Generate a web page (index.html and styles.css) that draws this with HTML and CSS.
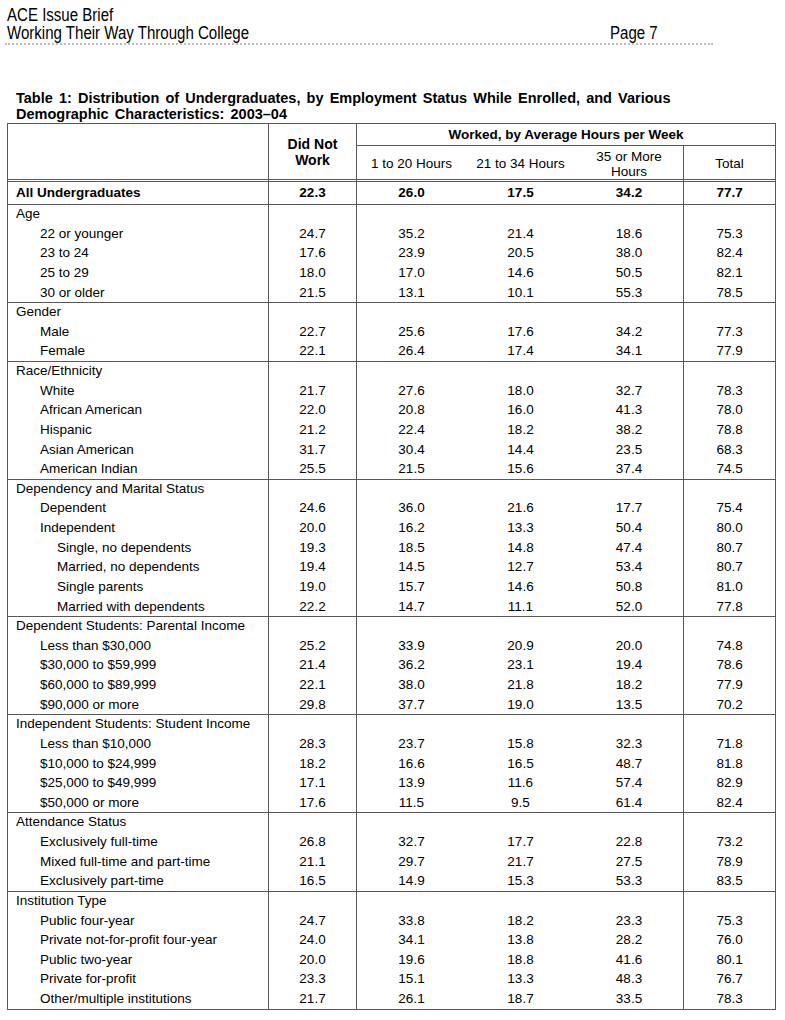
FILE: index.html
```html
<!DOCTYPE html>
<html lang="en">
<head>
<meta charset="utf-8">
<title>ACE Issue Brief – Table 1</title>
<link rel="stylesheet" href="styles.css">
</head>
<body>
<div class="page">
  <header class="runhead">
    <div class="rh-line"><span class="narrow">ACE Issue Brief</span></div>
    <div class="rh-line rh-row"><span class="rh-title"><span class="narrow">Working Their Way Through College</span></span><span class="rh-page"><span class="narrow">Page 7</span></span></div>
  </header>

  <h1 class="caption">Table 1: Distribution of Undergraduates, by Employment Status While Enrolled, and Various<br>Demographic Characteristics: 2003–04</h1>

  <table class="dist">
    <colgroup>
      <col class="w-label"><col class="w-dnw"><col class="w-hr"><col class="w-hr"><col class="w-hr"><col class="w-tot">
    </colgroup>
    <thead>
      <tr>
        <th class="h-blank" rowspan="2"></th>
        <th class="h-dnw" rowspan="2">Did Not<br>Work</th>
        <th class="h-worked" colspan="4">Worked, by Average Hours per Week</th>
      </tr>
      <tr class="h-sub">
        <th>1 to 20 Hours</th>
        <th>21 to 34 Hours</th>
        <th class="h-two">35 or More<br>Hours</th>
        <th class="h-total">Total</th>
      </tr>
    </thead>
    <tbody class="all">
      <tr><td>All Undergraduates</td><td>22.3</td><td>26.0</td><td>17.5</td><td>34.2</td><td>77.7</td></tr>
    </tbody>
    <tbody class="grp">
      <tr class="gh"><td>Age</td><td></td><td></td><td></td><td></td><td></td></tr>
      <tr class="l1"><td>22 or younger</td><td>24.7</td><td>35.2</td><td>21.4</td><td>18.6</td><td>75.3</td></tr>
      <tr class="l1"><td>23 to 24</td><td>17.6</td><td>23.9</td><td>20.5</td><td>38.0</td><td>82.4</td></tr>
      <tr class="l1"><td>25 to 29</td><td>18.0</td><td>17.0</td><td>14.6</td><td>50.5</td><td>82.1</td></tr>
      <tr class="l1"><td>30 or older</td><td>21.5</td><td>13.1</td><td>10.1</td><td>55.3</td><td>78.5</td></tr>
    </tbody>
    <tbody class="grp">
      <tr class="gh"><td>Gender</td><td></td><td></td><td></td><td></td><td></td></tr>
      <tr class="l1"><td>Male</td><td>22.7</td><td>25.6</td><td>17.6</td><td>34.2</td><td>77.3</td></tr>
      <tr class="l1"><td>Female</td><td>22.1</td><td>26.4</td><td>17.4</td><td>34.1</td><td>77.9</td></tr>
    </tbody>
    <tbody class="grp">
      <tr class="gh"><td>Race/Ethnicity</td><td></td><td></td><td></td><td></td><td></td></tr>
      <tr class="l1"><td>White</td><td>21.7</td><td>27.6</td><td>18.0</td><td>32.7</td><td>78.3</td></tr>
      <tr class="l1"><td>African American</td><td>22.0</td><td>20.8</td><td>16.0</td><td>41.3</td><td>78.0</td></tr>
      <tr class="l1"><td>Hispanic</td><td>21.2</td><td>22.4</td><td>18.2</td><td>38.2</td><td>78.8</td></tr>
      <tr class="l1"><td>Asian American</td><td>31.7</td><td>30.4</td><td>14.4</td><td>23.5</td><td>68.3</td></tr>
      <tr class="l1"><td>American Indian</td><td>25.5</td><td>21.5</td><td>15.6</td><td>37.4</td><td>74.5</td></tr>
    </tbody>
    <tbody class="grp">
      <tr class="gh"><td>Dependency and Marital Status</td><td></td><td></td><td></td><td></td><td></td></tr>
      <tr class="l1"><td>Dependent</td><td>24.6</td><td>36.0</td><td>21.6</td><td>17.7</td><td>75.4</td></tr>
      <tr class="l1"><td>Independent</td><td>20.0</td><td>16.2</td><td>13.3</td><td>50.4</td><td>80.0</td></tr>
      <tr class="l2"><td>Single, no dependents</td><td>19.3</td><td>18.5</td><td>14.8</td><td>47.4</td><td>80.7</td></tr>
      <tr class="l2"><td>Married, no dependents</td><td>19.4</td><td>14.5</td><td>12.7</td><td>53.4</td><td>80.7</td></tr>
      <tr class="l2"><td>Single parents</td><td>19.0</td><td>15.7</td><td>14.6</td><td>50.8</td><td>81.0</td></tr>
      <tr class="l2"><td>Married with dependents</td><td>22.2</td><td>14.7</td><td>11.1</td><td>52.0</td><td>77.8</td></tr>
    </tbody>
    <tbody class="grp">
      <tr class="gh"><td>Dependent Students: Parental Income</td><td></td><td></td><td></td><td></td><td></td></tr>
      <tr class="l1"><td>Less than $30,000</td><td>25.2</td><td>33.9</td><td>20.9</td><td>20.0</td><td>74.8</td></tr>
      <tr class="l1"><td>$30,000 to $59,999</td><td>21.4</td><td>36.2</td><td>23.1</td><td>19.4</td><td>78.6</td></tr>
      <tr class="l1"><td>$60,000 to $89,999</td><td>22.1</td><td>38.0</td><td>21.8</td><td>18.2</td><td>77.9</td></tr>
      <tr class="l1"><td>$90,000 or more</td><td>29.8</td><td>37.7</td><td>19.0</td><td>13.5</td><td>70.2</td></tr>
    </tbody>
    <tbody class="grp">
      <tr class="gh"><td>Independent Students: Student Income</td><td></td><td></td><td></td><td></td><td></td></tr>
      <tr class="l1"><td>Less than $10,000</td><td>28.3</td><td>23.7</td><td>15.8</td><td>32.3</td><td>71.8</td></tr>
      <tr class="l1"><td>$10,000 to $24,999</td><td>18.2</td><td>16.6</td><td>16.5</td><td>48.7</td><td>81.8</td></tr>
      <tr class="l1"><td>$25,000 to $49,999</td><td>17.1</td><td>13.9</td><td>11.6</td><td>57.4</td><td>82.9</td></tr>
      <tr class="l1"><td>$50,000 or more</td><td>17.6</td><td>11.5</td><td>9.5</td><td>61.4</td><td>82.4</td></tr>
    </tbody>
    <tbody class="grp">
      <tr class="gh"><td>Attendance Status</td><td></td><td></td><td></td><td></td><td></td></tr>
      <tr class="l1"><td>Exclusively full-time</td><td>26.8</td><td>32.7</td><td>17.7</td><td>22.8</td><td>73.2</td></tr>
      <tr class="l1"><td>Mixed full-time and part-time</td><td>21.1</td><td>29.7</td><td>21.7</td><td>27.5</td><td>78.9</td></tr>
      <tr class="l1"><td>Exclusively part-time</td><td>16.5</td><td>14.9</td><td>15.3</td><td>53.3</td><td>83.5</td></tr>
    </tbody>
    <tbody class="grp">
      <tr class="gh"><td>Institution Type</td><td></td><td></td><td></td><td></td><td></td></tr>
      <tr class="l1"><td>Public four-year</td><td>24.7</td><td>33.8</td><td>18.2</td><td>23.3</td><td>75.3</td></tr>
      <tr class="l1"><td>Private not-for-profit four-year</td><td>24.0</td><td>34.1</td><td>13.8</td><td>28.2</td><td>76.0</td></tr>
      <tr class="l1"><td>Public two-year</td><td>20.0</td><td>19.6</td><td>18.8</td><td>41.6</td><td>80.1</td></tr>
      <tr class="l1"><td>Private for-profit</td><td>23.3</td><td>15.1</td><td>13.3</td><td>48.3</td><td>76.7</td></tr>
      <tr class="l1"><td>Other/multiple institutions</td><td>21.7</td><td>26.1</td><td>18.7</td><td>33.5</td><td>78.3</td></tr>
    </tbody>
  </table>
</div>
</body>
</html>
```

FILE: styles.css
```css
html, body {
  margin: 0;
  padding: 0;
  background: #ffffff;
}

body {
  font-family: "Liberation Sans", Arial, sans-serif;
  color: #000;
}

.page {
  width: 785px;
  height: 1020px;
  overflow: hidden;
}

/* running head */
.runhead {
  margin: 0 0 0 5px;
  width: 708px;
  padding: 6px 0 1px 2px;
  box-sizing: border-box;
  border-bottom: 2px dotted #bdbdbd;
  font-family: "Liberation Sans", Arial, sans-serif;
  font-size: 17.5px;
  line-height: 18px;
}

.narrow {
  display: inline-block;
  transform: scaleX(0.86);
  transform-origin: 0 50%;
  white-space: nowrap;
}

.rh-row {
  display: flex;
}

.rh-title {
  width: 603px;
  flex: none;
}

/* caption */
.caption {
  margin: 45px 0 1px 16px;
  font-size: 14.5px;
  line-height: 16px;
  font-weight: bold;
  word-spacing: 2.1px;
  white-space: nowrap;
}

/* table */
.dist {
  margin-left: 7px;
  width: 769px;
  table-layout: fixed;
  border-collapse: separate;
  border-spacing: 0;
  border: 1px solid #595959;
  font-size: 13.5px;
}

.w-label { width: 261px; }
.w-dnw { width: 88px; }
.w-hr { width: 109px; }
.w-tot { width: 91px; }

.dist th,
.dist td {
  padding: 0;
  box-sizing: border-box;
}

.dist th {
  text-align: center;
  vertical-align: middle;
}

.h-blank,
.h-dnw {
  border-right: 1px solid #595959;
  border-bottom: 3px double #595959;
}

.h-dnw {
  font-weight: bold;
  font-size: 14px;
  line-height: 16px;
}

.h-worked {
  height: 22px;
  line-height: 21px;
  font-weight: bold;
  border-bottom: 1px solid #595959;
}

.h-sub th {
  font-weight: normal;
  line-height: 14.5px;
  padding-top: 4px;
  height: 36px;
  border-bottom: 3px double #595959;
}

.h-sub .h-two {
  border-right: 1px solid #595959;
}

/* body cells */
.dist td {
  text-align: center;
  line-height: 19.625px;
  white-space: nowrap;
}

.dist td:nth-child(1) {
  text-align: left;
  padding-left: 8px;
}

.dist td:nth-child(1),
.dist td:nth-child(2),
.dist td:nth-child(5) {
  border-right: 1px solid #595959;
}

.all td {
  font-weight: bold;
  line-height: 22px;
}

.grp tr:first-child td {
  border-top: 1px solid #595959;
  line-height: 18.625px;
}

.dist .l1 td:nth-child(1) {
  padding-left: 32px;
}

.dist .l2 td:nth-child(1) {
  padding-left: 49px;
}
```
